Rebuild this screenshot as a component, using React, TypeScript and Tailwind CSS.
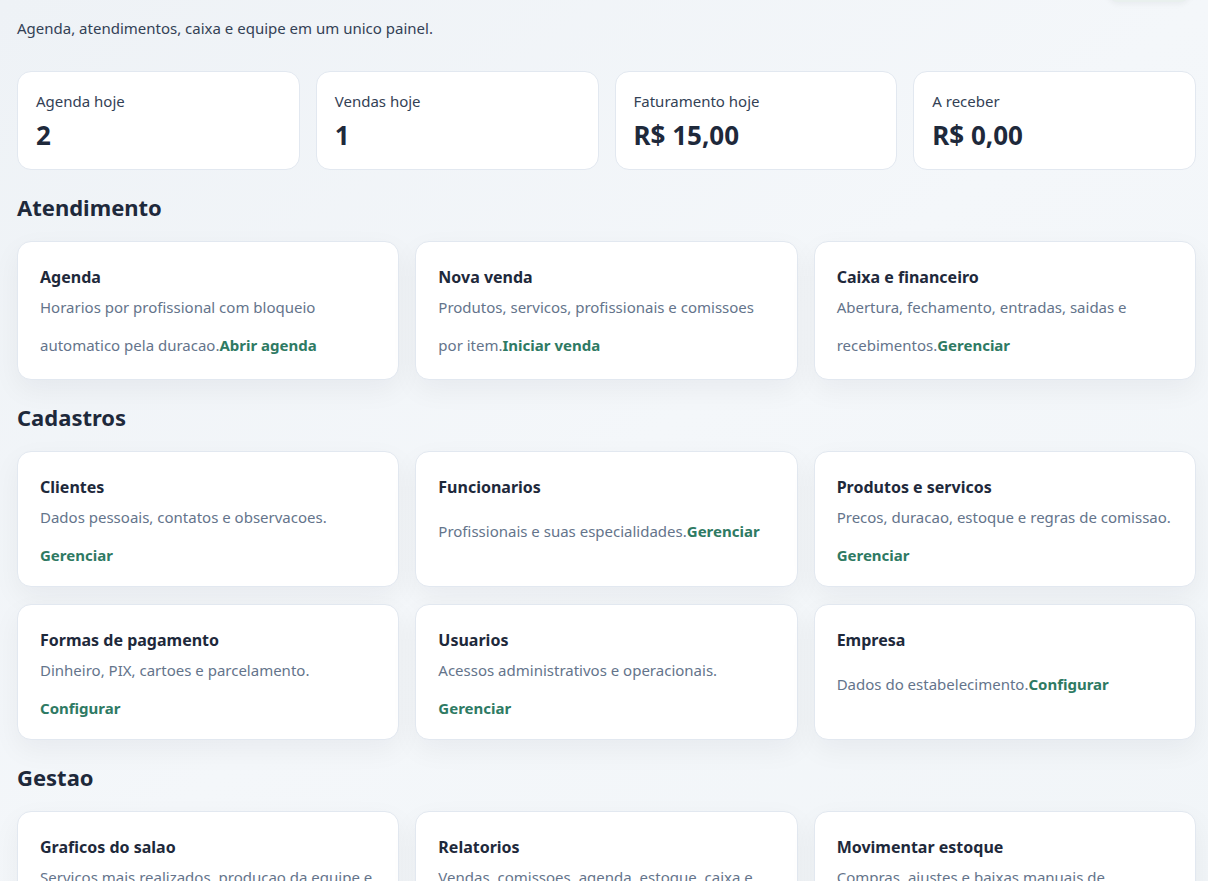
import React from "react";

const font = { fontFamily: '"Noto Sans", "Open Sans", Arial, sans-serif' };

type Item = { title: string; desc: string; link: string };

const stats = [
  { label: "Agenda hoje", value: "2" },
  { label: "Vendas hoje", value: "1" },
  { label: "Faturamento hoje", value: "R$ 15,00" },
  { label: "A receber", value: "R$ 0,00" },
];

const sections: { title: string; tall?: boolean; items: Item[] }[] = [
  {
    title: "Atendimento",
    tall: true,
    items: [
      { title: "Agenda", desc: "Horarios por profissional com bloqueio automatico pela duracao.", link: "Abrir agenda" },
      { title: "Nova venda", desc: "Produtos, servicos, profissionais e comissoes por item.", link: "Iniciar venda" },
      { title: "Caixa e financeiro", desc: "Abertura, fechamento, entradas, saidas e recebimentos.", link: "Gerenciar" },
    ],
  },
  {
    title: "Cadastros",
    items: [
      { title: "Clientes", desc: "Dados pessoais, contatos e observacoes.", link: "Gerenciar" },
      { title: "Funcionarios", desc: "Profissionais e suas especialidades.", link: "Gerenciar" },
      { title: "Produtos e servicos", desc: "Precos, duracao, estoque e regras de comissao.", link: "Gerenciar" },
      { title: "Formas de pagamento", desc: "Dinheiro, PIX, cartoes e parcelamento.", link: "Configurar" },
      { title: "Usuarios", desc: "Acessos administrativos e operacionais.", link: "Gerenciar" },
      { title: "Empresa", desc: "Dados do estabelecimento.", link: "Configurar" },
    ],
  },
  {
    title: "Gestao",
    items: [
      { title: "Graficos do salao", desc: "Servicos mais realizados, producao da equipe e faturamento.", link: "Ver graficos" },
      { title: "Relatorios", desc: "Vendas, comissoes, agenda, estoque, caixa e clientes.", link: "Abrir" },
      { title: "Movimentar estoque", desc: "Compras, ajustes e baixas manuais de produtos.", link: "Movimentar" },
    ],
  },
];

function Card({ item, tall }: { item: Item; tall?: boolean }) {
  return (
    <div
      className={
        tall
          ? "min-h-[139px] rounded-[14px] border border-[#e2e8f0] bg-white px-[22px] pt-[23px] pb-[19px] shadow-[0_10px_28px_rgba(15,23,42,0.05)]"
          : "rounded-[14px] border border-[#e2e8f0] bg-white px-[22px] pt-[23px] pb-[19px] shadow-[0_10px_28px_rgba(15,23,42,0.05)]"
      }
    >
      <div className="text-[16px] font-bold leading-[24px] text-[#1e293b]">{item.title}</div>
      <div className="mt-[6px] text-[15px] leading-[24px] text-[#64748b]">
        {item.desc}
        <a className="mt-[14px] inline-block font-bold text-[#2e7a63]">{item.link}</a>
      </div>
    </div>
  );
}

export default function App() {
  return (
    <div
      className="min-h-[881px] overflow-hidden bg-gradient-to-br from-[#eef2f6] via-[#f4f7fa] to-[#f1f5f8] pl-[17px] pr-[12px]"
      style={font}
    >
      <div className="-mt-[40px] flex justify-end pr-[6px]">
        <div className="h-[42px] w-[82px] rounded-[10px] bg-[#e9f0ee] shadow-[0_2px_6px_rgba(15,23,42,0.05)]" />
      </div>
      <p className="mt-[15px] text-[15px] leading-[22px] text-[#334155]">
        Agenda, atendimentos, caixa e equipe em um unico painel.
      </p>
      <div className="mt-[32px] grid grid-cols-4 gap-4">
        {stats.map((s) => (
          <div
            key={s.label}
            className="rounded-[14px] border border-[#e2e8f0] bg-white px-[18px] pt-[18px] pb-[17px]"
          >
            <div className="text-[15px] leading-[22px] text-[#334155]">{s.label}</div>
            <div className="mt-[7px] text-[26px] font-bold leading-[33px] text-[#1e293b]">{s.value}</div>
          </div>
        ))}
      </div>
      {sections.map((sec) => (
        <section key={sec.title} className="mt-[22px]">
          <h2 className="mb-[19px] text-[22px] font-bold leading-[30px] text-[#1e293b]">{sec.title}</h2>
          <div className="grid grid-cols-3 gap-x-4 gap-y-[17px]">
            {sec.items.map((it) => (
              <Card key={it.title} item={it} tall={sec.tall} />
            ))}
          </div>
        </section>
      ))}
    </div>
  );
}
